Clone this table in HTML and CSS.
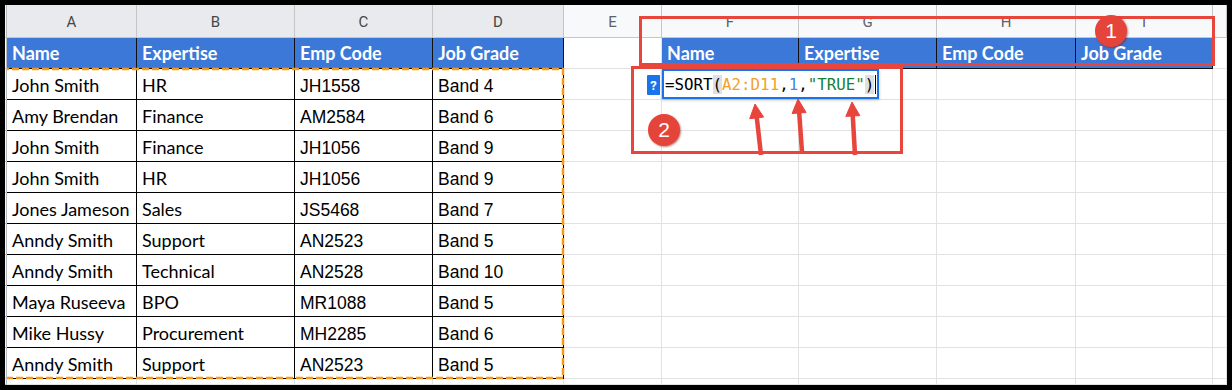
FILE: index.html
```html
<!DOCTYPE html>
<html>
<head>
<meta charset="utf-8">
<link rel="stylesheet" href="styles.css">
</head>
<body>
<div class="sheet">
  <!-- row 0: column letters -->
  <div class="rh"></div>
  <div class="ch sel">A</div><div class="ch sel">B</div><div class="ch sel">C</div><div class="ch sel">D</div>
  <div class="ch">E</div><div class="ch">F</div><div class="ch">G</div><div class="ch">H</div><div class="ch">I</div><div class="ch"></div>

  <!-- row 1: headers -->
  <div class="rh"></div>
  <div class="hd">Name</div><div class="hd">Expertise</div><div class="hd">Emp Code</div><div class="hd">Job Grade</div>
  <div class="c"></div>
  <div class="hd">Name</div><div class="hd">Expertise</div><div class="hd">Emp Code</div><div class="hd">Job Grade</div>
  <div class="c"></div>

  <div class="rh"></div>
  <div class="d cal">John Smith</div><div class="d cal">HR</div><div class="d ar">JH1558</div><div class="d ar">Band 4</div>
  <div class="c"></div><div class="c"></div><div class="c"></div><div class="c"></div><div class="c"></div><div class="c"></div>

  <div class="rh"></div>
  <div class="d cal">Amy Brendan</div><div class="d cal">Finance</div><div class="d ar">AM2584</div><div class="d ar">Band 6</div>
  <div class="c"></div><div class="c"></div><div class="c"></div><div class="c"></div><div class="c"></div><div class="c"></div>

  <div class="rh"></div>
  <div class="d cal">John Smith</div><div class="d cal">Finance</div><div class="d ar">JH1056</div><div class="d ar">Band 9</div>
  <div class="c"></div><div class="c"></div><div class="c"></div><div class="c"></div><div class="c"></div><div class="c"></div>

  <div class="rh"></div>
  <div class="d cal">John Smith</div><div class="d cal">HR</div><div class="d ar">JH1056</div><div class="d ar">Band 9</div>
  <div class="c"></div><div class="c"></div><div class="c"></div><div class="c"></div><div class="c"></div><div class="c"></div>

  <div class="rh"></div>
  <div class="d cal">Jones Jameson</div><div class="d cal">Sales</div><div class="d ar">JS5468</div><div class="d ar">Band 7</div>
  <div class="c"></div><div class="c"></div><div class="c"></div><div class="c"></div><div class="c"></div><div class="c"></div>

  <div class="rh"></div>
  <div class="d cal">Anndy Smith</div><div class="d cal">Support</div><div class="d ar">AN2523</div><div class="d ar">Band 5</div>
  <div class="c"></div><div class="c"></div><div class="c"></div><div class="c"></div><div class="c"></div><div class="c"></div>

  <div class="rh"></div>
  <div class="d cal">Anndy Smith</div><div class="d cal">Technical</div><div class="d ar">AN2528</div><div class="d ar">Band 10</div>
  <div class="c"></div><div class="c"></div><div class="c"></div><div class="c"></div><div class="c"></div><div class="c"></div>

  <div class="rh"></div>
  <div class="d cal">Maya Ruseeva</div><div class="d cal">BPO</div><div class="d ar">MR1088</div><div class="d ar">Band 5</div>
  <div class="c"></div><div class="c"></div><div class="c"></div><div class="c"></div><div class="c"></div><div class="c"></div>

  <div class="rh"></div>
  <div class="d cal">Mike Hussy</div><div class="d cal">Procurement</div><div class="d ar">MH2285</div><div class="d ar">Band 6</div>
  <div class="c"></div><div class="c"></div><div class="c"></div><div class="c"></div><div class="c"></div><div class="c"></div>

  <div class="rh"></div>
  <div class="d cal">Anndy Smith</div><div class="d cal">Support</div><div class="d ar">AN2523</div><div class="d ar">Band 5</div>
  <div class="c"></div><div class="c"></div><div class="c"></div><div class="c"></div><div class="c"></div><div class="c"></div>

  <div class="rh"></div>
  <div class="c"></div><div class="c"></div><div class="c"></div><div class="c"></div>
  <div class="c"></div><div class="c"></div><div class="c"></div><div class="c"></div><div class="c"></div><div class="c"></div>

  <!-- overlays -->
  <svg class="marquee" width="1222" height="380" viewBox="0 0 1222 380">
    <rect x="-3" y="64" width="561" height="309" fill="none" stroke="#f5991a" stroke-width="2.5" stroke-dasharray="7 3"/>
  </svg>

  <div class="hint">?</div>
  <div class="editor"><span class="t-k">=SORT</span><span class="t-p">(</span><span class="t-r">A2:D11</span><span class="t-k">,</span><span class="t-n">1</span><span class="t-k">,</span><span class="t-s">"TRUE"</span><span class="t-p">)</span><span class="caret"></span></div>

  <div class="box box1"></div>
  <div class="box box2"></div>

  <svg class="arrows" width="1222" height="380" viewBox="0 0 1222 380">
    <g fill="#e8453c" stroke="#e8453c">
      <line x1="756" y1="150" x2="751.5" y2="110" stroke-width="4.5"/>
      <polygon points="750,99 758.6,112.1 744.7,113.7" stroke-width="1"/>
      <line x1="797" y1="147" x2="794" y2="105" stroke-width="4.5"/>
      <polygon points="793,94 801.1,107.5 787.1,108.5" stroke-width="1"/>
      <line x1="850" y1="150" x2="847.6" y2="108" stroke-width="4.5"/>
      <polygon points="847,97 854.8,110.6 840.8,111.4" stroke-width="1"/>
    </g>
  </svg>

  <div class="badge badge1">1</div>
  <div class="badge badge2">2</div>
</div>
</body>
</html>
```

FILE: styles.css
```css
* { box-sizing: border-box; }

html, body {
  margin: 0;
  padding: 0;
}

body {
  background: #000;
  width: 1232px;
  height: 390px;
  padding: 5px;
  overflow: hidden;
}

.sheet {
  position: relative;
  width: 1222px;
  height: 380px;
  background: #fff;
  overflow: hidden;
  display: grid;
  grid-template-columns: 2px 130px 158px 138px 131px 98px 137px 138px 139px 137px 14px;
  grid-template-rows: 33px repeat(11, 31px) 6px;
}

.rh {
  background: #f8f9fa;
  border-right: 1px solid #b8bbbd;
  border-bottom: 1px solid #c4c7c5;
  position: relative;
  z-index: 1;
}

.ch {
  background: #f8f9fa;
  border-right: 1px solid #c4c7c5;
  border-bottom: 1px solid #c4c7c5;
  display: flex;
  align-items: center;
  justify-content: center;
  font-family: Roboto, "Liberation Sans", sans-serif;
  font-size: 15px;
  color: #5f6368;
  padding-top: 2px;
}

.ch.sel {
  background: #e8eaed;
  color: #444746;
}

.c {
  border-right: 1px solid #e2e2e2;
  border-bottom: 1px solid #e2e2e2;
}

.hd {
  background: #3c78d8;
  color: #fff;
  font-family: Lato, "Open Sans", sans-serif;
  font-weight: 700;
  font-size: 18px;
  line-height: 20px;
  border-right: 1px solid #111;
  border-bottom: 1px solid #111;
  display: flex;
  align-items: flex-end;
  padding: 0 4px 5px 5px;
  white-space: nowrap;
  overflow: hidden;
}

.d {
  border-right: 1px solid #000;
  border-bottom: 1px solid #000;
  color: #000;
  display: flex;
  align-items: flex-end;
  white-space: nowrap;
  overflow: hidden;
  line-height: 20px;
}

.cal {
  font-family: Lato, "Open Sans", sans-serif;
  font-size: 18px;
  padding: 0 4px 4px 5px;
}

.ar {
  font-family: "Liberation Sans", Arial, sans-serif;
  font-size: 17.5px;
  padding: 0 4px 3px 5px;
}

.marquee, .arrows {
  position: absolute;
  left: 0;
  top: 0;
  pointer-events: none;
}

.hint {
  position: absolute;
  left: 642px;
  top: 70px;
  width: 13px;
  height: 20px;
  background: #1a73e8;
  color: #fff;
  font-family: Roboto, "Liberation Sans", sans-serif;
  font-weight: 700;
  font-size: 13px;
  display: flex;
  align-items: center;
  justify-content: center;
  border-radius: 1px;
}

.editor {
  position: absolute;
  left: 657px;
  top: 64px;
  width: 217px;
  height: 30px;
  background: #fff;
  border: 2px solid #1a73e8;
  box-shadow: 0 1px 3px rgba(0,0,0,0.25);
  padding: 0 0 0 1px;
  display: flex;
  align-items: center;
  font-family: "DejaVu Sans Mono", "Liberation Mono", monospace;
  font-size: 15.8px;
  white-space: nowrap;
  color: #000;
}

.t-k { color: #000; }
.t-p { background: #e0e0e0; }
.t-r { color: #f4a12a; }
.t-n { color: #4a86e8; }
.t-s { color: #188038; }

.caret {
  display: inline-block;
  width: 1px;
  height: 19px;
  background: #000;
  margin-left: 1px;
}

.box {
  position: absolute;
  border: 3px solid #e8453c;
}

.box1 {
  left: 634px;
  top: 11px;
  width: 576px;
  height: 50px;
}

.box2 {
  left: 626px;
  top: 61px;
  width: 272px;
  height: 88px;
}

.badge {
  position: absolute;
  width: 32px;
  height: 32px;
  border-radius: 50%;
  background: #e5443a;
  color: #fff;
  font-family: "Liberation Sans", Arial, sans-serif;
  font-size: 21px;
  display: flex;
  align-items: center;
  justify-content: center;
  box-shadow: 1px 1px 2px rgba(120, 20, 10, 0.5);
}

.badge1 {
  left: 1090px;
  top: 10px;
}

.badge2 {
  left: 643px;
  top: 109px;
}
```
